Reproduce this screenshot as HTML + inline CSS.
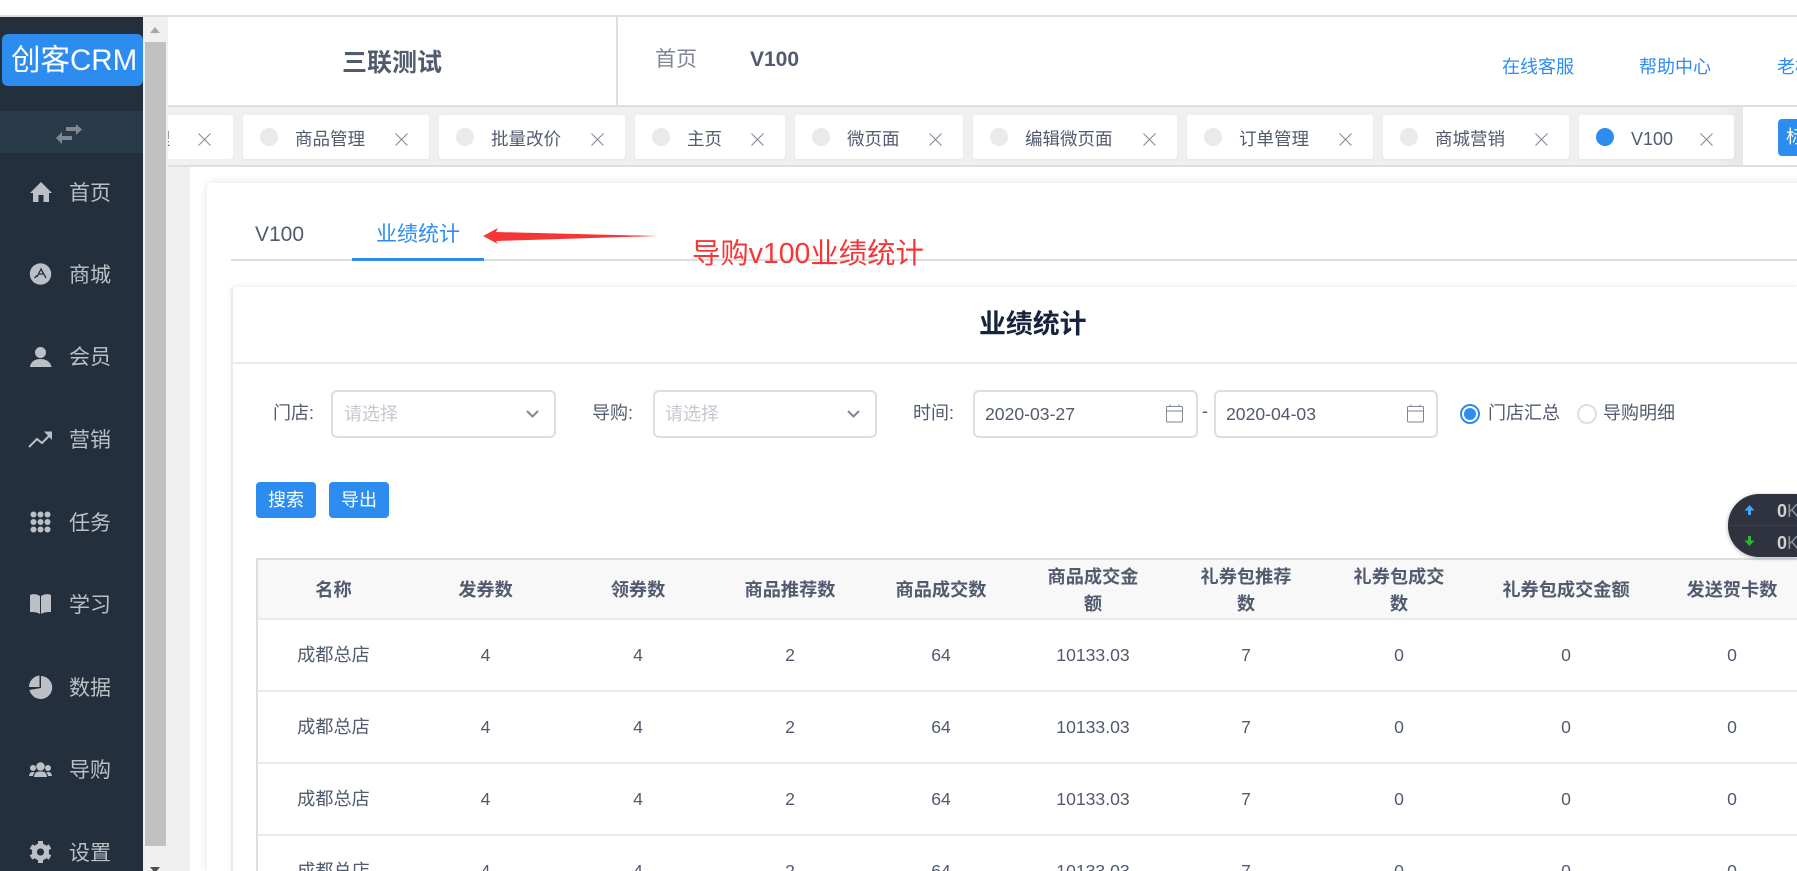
<!DOCTYPE html>
<html lang="zh-CN">
<head>
<meta charset="utf-8">
<title>业绩统计</title>
<style>
html,body{margin:0;padding:0;width:1797px;height:871px;overflow:hidden;background:#fff;}
body{font-family:"Liberation Sans","Noto Sans CJK SC",sans-serif;color:#515a6e;}
#root{position:absolute;left:0;top:0;width:1797px;height:871px;overflow:hidden;background:#fff;}
div,span{box-sizing:border-box;}
.a{position:absolute;}
.t{position:absolute;white-space:nowrap;line-height:28px;height:28px;}
.tab{position:absolute;top:115px;height:44px;background:#fff;border-radius:3px;box-shadow:0 1px 2px rgba(0,0,0,.05);}
.tab i{position:absolute;left:17px;top:13px;width:18px;height:18px;border-radius:50%;background:#e8eaec;}
.tab span{position:absolute;left:52px;top:10px;line-height:28px;font-size:17.5px;white-space:nowrap;}
.tab svg{position:absolute;right:21px;top:18px;}
.m{position:absolute;left:69px;font-size:21px;line-height:28px;height:28px;color:#bbbfc6;white-space:nowrap;}
.box{position:absolute;top:390px;height:48px;border:2px solid #dcdee2;border-radius:6px;background:#fff;}
.lb{position:absolute;top:399px;font-size:18px;line-height:28px;color:#515a6e;white-space:nowrap;}
.ph{position:absolute;top:400px;font-size:18px;line-height:28px;color:#c5c8ce;white-space:nowrap;}
.dt{position:absolute;top:400px;font-size:17.6px;line-height:28px;color:#515a6e;white-space:nowrap;}
.btn{position:absolute;top:482px;width:60px;height:36px;border-radius:4px;background:#2d8cf0;color:#fff;font-size:18px;line-height:37px;text-align:center;}
.tbl{position:absolute;left:256px;top:558px;width:1600px;border-top:2px solid #dcdee2;border-left:2px solid #dcdee2;}
.r{display:flex;height:72px;border-bottom:2px solid #e8eaec;}
.r.h{height:60px;background:#f8f8f9;font-weight:700;font-size:18px;line-height:26.5px;color:#515a6e;}
.r div{display:flex;align-items:center;justify-content:center;text-align:center;flex:none;font-size:17.6px;}
.r.h div{font-size:18.2px;padding-top:3px;}
.r div.n{font-size:18.2px;padding-bottom:2px;}
.c1{width:151px}.c2{width:153px}.c3{width:152px}.c4{width:152px}.c5{width:150px}
.c6{width:154px}.c7{width:152px}.c8{width:154px}.c9{width:180px}.c10{width:152px}
</style>
</head>
<body>
<div id="root">

<!-- top line -->
<div class="a" style="left:0;top:15px;width:1797px;height:2px;background:#dcdee2;"></div>

<!-- header -->
<div class="a" style="left:168px;top:17px;width:1629px;height:88px;background:#fff;"></div>
<div class="a" style="left:616px;top:17px;width:2px;height:88px;background:#dcdee2;"></div>
<div class="t" style="left:342px;top:49px;font-size:25px;font-weight:700;color:#515a6e;">三联测试</div>
<div class="t" style="left:655px;top:46px;font-size:21px;color:#808695;">首页</div>
<div class="t" style="left:750px;top:46px;font-size:21px;font-weight:700;color:#515a6e;">V100</div>
<div class="t" style="left:1502px;top:53px;font-size:18px;color:#2d8cf0;">在线客服</div>
<div class="t" style="left:1639px;top:53px;font-size:18px;color:#2d8cf0;">帮助中心</div>
<div class="t" style="left:1777px;top:53px;font-size:18px;color:#2d8cf0;">老板</div>
<div class="a" style="left:168px;top:105px;width:1629px;height:2px;background:#dcdee2;"></div>

<!-- tabs bar -->
<div class="a" style="left:168px;top:107px;width:1575px;height:58px;background:#f0f0f0;overflow:hidden;">
  <div class="a" style="left:1550px;top:0;width:25px;height:58px;background:linear-gradient(90deg,rgba(225,225,225,0),#e6e6e6);"></div>
</div>
<div class="a" style="left:168px;top:165px;width:1629px;height:2px;background:#dcdee2;"></div>
<div class="a" style="left:168px;top:115px;width:1575px;height:44px;overflow:hidden;">
  <div class="tab" style="left:-20px;top:0;width:85px;"><span style="left:-48px;color:#515a6e;">商品管理</span>
    <svg width="13" height="13" viewBox="0 0 13 13" style="right:22px"><path d="M.5.5l12 12M12.500.5l-12 12" stroke="#808695" stroke-width="1" fill="none"/></svg></div>
</div>
<div class="tab" style="left:243px;width:186px;"><i></i><span>商品管理</span><svg width="13" height="13" viewBox="0 0 13 13"><path d="M.5.5l12 12M12.500.5l-12 12" stroke="#808695" stroke-width="1" fill="none"/></svg></div>
<div class="tab" style="left:439px;width:186px;"><i></i><span>批量改价</span><svg width="13" height="13" viewBox="0 0 13 13"><path d="M.5.5l12 12M12.500.5l-12 12" stroke="#808695" stroke-width="1" fill="none"/></svg></div>
<div class="tab" style="left:635px;width:150px;"><i></i><span>主页</span><svg width="13" height="13" viewBox="0 0 13 13"><path d="M.5.5l12 12M12.500.5l-12 12" stroke="#808695" stroke-width="1" fill="none"/></svg></div>
<div class="tab" style="left:795px;width:168px;"><i></i><span>微页面</span><svg width="13" height="13" viewBox="0 0 13 13"><path d="M.5.5l12 12M12.500.5l-12 12" stroke="#808695" stroke-width="1" fill="none"/></svg></div>
<div class="tab" style="left:973px;width:204px;"><i></i><span>编辑微页面</span><svg width="13" height="13" viewBox="0 0 13 13"><path d="M.5.5l12 12M12.500.5l-12 12" stroke="#808695" stroke-width="1" fill="none"/></svg></div>
<div class="tab" style="left:1187px;width:186px;"><i></i><span>订单管理</span><svg width="13" height="13" viewBox="0 0 13 13"><path d="M.5.5l12 12M12.500.5l-12 12" stroke="#808695" stroke-width="1" fill="none"/></svg></div>
<div class="tab" style="left:1383px;width:186px;"><i></i><span>商城营销</span><svg width="13" height="13" viewBox="0 0 13 13"><path d="M.5.5l12 12M12.500.5l-12 12" stroke="#808695" stroke-width="1" fill="none"/></svg></div>
<div class="tab" style="left:1579px;width:155px;"><i style="background:#2d8cf0;"></i><span style="left:52px;font-size:18px;">V100</span><svg width="13" height="13" viewBox="0 0 13 13"><path d="M.5.5l12 12M12.500.5l-12 12" stroke="#808695" stroke-width="1" fill="none"/></svg></div>
<div class="a" style="left:1778px;top:119px;width:40px;height:37px;background:#2d8cf0;border-radius:4px;color:#fff;font-size:18px;line-height:37px;padding-left:8px;overflow:hidden;">标</div>

<!-- scroll gutter -->
<div class="a" style="left:143px;top:17px;width:25px;height:150px;background:#f0f0f0;"></div>
<div class="a" style="left:143px;top:167px;width:47px;height:704px;background:#f0f0f0;"></div>
<div class="a" style="left:145px;top:42px;width:21px;height:804px;background:#c1c1c1;"></div>
<div class="a" style="left:150px;top:27px;width:0;height:0;border-left:5.500px solid transparent;border-right:5.500px solid transparent;border-bottom:6px solid #a8a8a8;"></div>
<div class="a" style="left:150px;top:867px;width:0;height:0;border-left:5.500px solid transparent;border-right:5.500px solid transparent;border-top:6px solid #505050;"></div>

<!-- main card -->
<div class="a" style="left:207px;top:183px;width:1700px;height:688px;background:#fff;border-radius:5px 0 0 0;box-shadow:0 0 10px rgba(0,0,0,.12);"></div>
<div class="t" style="left:255px;top:221px;font-size:21px;">V100</div>
<div class="t" style="left:376px;top:221px;font-size:21px;color:#2d8cf0;">业绩统计</div>
<div class="a" style="left:231px;top:259px;width:1566px;height:2px;background:#dcdee2;"></div>
<div class="a" style="left:352px;top:258px;width:132px;height:3px;background:#2d8cf0;"></div>

<!-- annotation -->
<svg class="a" style="left:470px;top:220px;" width="200" height="30" viewBox="470 220 200 30">
  <polygon points="483,236 498,228 496,232 658,236 496,241 498,244" fill="#f63636"/>
</svg>
<div class="t" style="left:692px;top:240px;font-size:28.4px;color:#f63636;">导购v100业绩统计</div>

<!-- inner card -->
<div class="a" style="left:231px;top:287px;width:1566px;height:584px;background:#fff;border-left:2px solid #e8eaec;box-shadow:0 -1px 5px rgba(0,0,0,.08);border-radius:4px 0 0 0;"></div>
<div class="t" style="left:979px;top:310px;font-size:26.9px;font-weight:700;color:#17233d;">业绩统计</div>
<div class="a" style="left:233px;top:362px;width:1564px;height:2px;background:#e8eaec;"></div>

<!-- filters -->
<div class="lb" style="left:273px;">门店:</div>
<div class="box" style="left:331px;width:225px;"></div>
<div class="ph" style="left:344px;">请选择</div>
<div class="lb" style="left:592px;">导购:</div>
<div class="box" style="left:653px;width:224px;"></div>
<div class="ph" style="left:665px;">请选择</div>
<div class="lb" style="left:913px;">时间:</div>
<div class="box" style="left:973px;width:225px;"></div>
<div class="dt" style="left:985px;">2020-03-27</div>
<div class="t" style="left:1202px;top:397px;font-size:18px;">-</div>
<div class="box" style="left:1214px;width:224px;"></div>
<div class="dt" style="left:1226px;">2020-04-03</div>
<div class="a" style="left:1460px;top:404px;width:20px;height:20px;border:2px solid #2d8cf0;border-radius:50%;"></div>
<div class="a" style="left:1464px;top:408px;width:12px;height:12px;background:#2d8cf0;border-radius:50%;"></div>
<div class="lb" style="left:1488px;">门店汇总</div>
<div class="a" style="left:1577px;top:404px;width:20px;height:20px;border:2px solid #dcdee2;border-radius:50%;background:#fff;"></div>
<div class="lb" style="left:1603px;">导购明细</div>

<div class="btn" style="left:256px;">搜索</div>
<div class="btn" style="left:329px;">导出</div>

<!-- table -->
<div class="tbl">
  <div class="r h"><div class="c1">名称</div><div class="c2">发券数</div><div class="c3">领券数</div><div class="c4">商品推荐数</div><div class="c5">商品成交数</div><div class="c6">商品成交金<br>额</div><div class="c7">礼券包推荐<br>数</div><div class="c8">礼券包成交<br>数</div><div class="c9">礼券包成交金额</div><div class="c10">发送贺卡数</div></div>
  <div class="r"><div class="c1 n">成都总店</div><div class="c2">4</div><div class="c3">4</div><div class="c4">2</div><div class="c5">64</div><div class="c6">10133.03</div><div class="c7">7</div><div class="c8">0</div><div class="c9">0</div><div class="c10">0</div></div>
  <div class="r"><div class="c1 n">成都总店</div><div class="c2">4</div><div class="c3">4</div><div class="c4">2</div><div class="c5">64</div><div class="c6">10133.03</div><div class="c7">7</div><div class="c8">0</div><div class="c9">0</div><div class="c10">0</div></div>
  <div class="r"><div class="c1 n">成都总店</div><div class="c2">4</div><div class="c3">4</div><div class="c4">2</div><div class="c5">64</div><div class="c6">10133.03</div><div class="c7">7</div><div class="c8">0</div><div class="c9">0</div><div class="c10">0</div></div>
  <div class="r"><div class="c1 n">成都总店</div><div class="c2">4</div><div class="c3">4</div><div class="c4">2</div><div class="c5">64</div><div class="c6">10133.03</div><div class="c7">7</div><div class="c8">0</div><div class="c9">0</div><div class="c10">0</div></div>
</div>

<!-- speed widget -->
<div class="a" style="left:1728px;top:494px;width:69px;height:63px;background:#2f333f;border-radius:31px 0 0 31px;box-shadow:0 1px 4px rgba(0,0,0,.3);overflow:hidden;">
  <div class="a" style="left:0;top:31px;width:69px;height:1px;background:#3b3f4b;"></div>
  <div class="a" style="left:49px;top:6px;font-size:18px;font-weight:700;line-height:22px;color:#d0d0d0;white-space:nowrap;">0<span style="font-weight:400;color:#8f939c;">K</span></div>
  <div class="a" style="left:49px;top:38px;font-size:18px;font-weight:700;line-height:22px;color:#d0d0d0;white-space:nowrap;">0<span style="font-weight:400;color:#8f939c;">K</span></div>
</div>

<!-- sidebar -->
<div class="a" style="left:0;top:17px;width:143px;height:854px;background:#232f3c;"></div>
<div class="a" style="left:0;top:111px;width:143px;height:42px;background:#293a4b;"></div>
<div class="a" style="left:2px;top:34px;width:141px;height:52px;background:#2d8cf0;border-radius:6px;color:#fff;font-size:29.5px;line-height:53px;padding-left:9px;white-space:nowrap;overflow:hidden;">创客CRM</div>
<div class="m" style="top:180px;">首页</div>
<div class="m" style="top:262px;">商城</div>
<div class="m" style="top:344px;">会员</div>
<div class="m" style="top:427px;">营销</div>
<div class="m" style="top:510px;">任务</div>
<div class="m" style="top:592px;">学习</div>
<div class="m" style="top:675px;">数据</div>
<div class="m" style="top:757px;">导购</div>
<div class="m" style="top:840px;">设置</div>

<!-- icon overlay, absolute coords -->
<svg class="a" style="left:0;top:0;pointer-events:none;" width="1797" height="871" viewBox="0 0 1797 871">
  <!-- swap -->
  <path d="M66 127H76V124L82 129.500 76 135V131H66Z" fill="#7f8791"/>
  <path d="M72 136H62V132L56 138 62 144V140H72Z" fill="#7f8791"/>
  <g fill="#bbbfc6">
    <!-- home -->
    <path d="M41 182L30 193H33V202H38.500V195H43.500V202H49V193H52Z"/>
    <!-- store -->
    <circle cx="40.500" cy="274" r="10.700"/>
    <!-- user -->
    <circle cx="40.500" cy="352.500" r="5.500"/>
    <path d="M30 367C30.500 361 36 359 40.500 359S50.500 361 51.500 367Z"/>
    <!-- trend head -->
    <path d="M44 431.500H52V440Z"/>
    <!-- grid -->
    <circle cx="33.500" cy="514.500" r="3"/><circle cx="40.500" cy="514.500" r="3"/><circle cx="47.500" cy="514.500" r="3"/>
    <circle cx="33.500" cy="522" r="3"/><circle cx="40.500" cy="522" r="3"/><circle cx="47.500" cy="522" r="3"/>
    <circle cx="33.500" cy="529.500" r="3"/><circle cx="40.500" cy="529.500" r="3"/><circle cx="47.500" cy="529.500" r="3"/>
    <!-- book -->
    <path d="M30 595C33 593.500 37 594 40 596V614C37 612 33 612 30 612Z"/>
    <path d="M51 595C48 593.500 44 594 41 596V614C44 612 48 612 51 612Z"/>
    <!-- pie -->
    <path d="M41 676A11.500 11.500 0 1 1 29.500 690L41 688Z"/>
    <path d="M39.500 675.500A11.500 11.500 0 0 0 29 687L39.500 687Z"/>
    <!-- team -->
    <circle cx="40.500" cy="766.500" r="4.300"/>
    <path d="M34 777C34.500 772 37 771.500 40.500 771.500S46.500 772 47 777Z"/>
    <circle cx="33" cy="768" r="3"/>
    <path d="M29 776C29.500 772.500 31 772 33 772L35 772.500C33.500 773.500 33 775 33 776Z"/>
    <circle cx="48" cy="768" r="3"/>
    <path d="M52 776C51.500 772.500 50 772 48 772L46 772.500C47.500 773.500 48 775 48 776Z"/>
    <!-- gear -->
    <circle cx="40.500" cy="852" r="8.500"/>
  </g>
  <!-- store glyph -->
  <path d="M34.500 278L37 275.500M37 277L41 269L46 278M38.500 274H43.500" stroke="#232f3c" stroke-width="1.300" fill="none"/>
  <!-- trend -->
  <path d="M29 447L37 439L42 443L50 435" stroke="#bbbfc6" stroke-width="2" fill="none"/>
  <!-- gear teeth -->
  <g stroke="#bbbfc6" stroke-width="5" fill="none">
    <path d="M40.500 841V863M31 846.500L50 857.500M31 857.500L50 846.500"/>
  </g>
  <circle cx="40.500" cy="852" r="3.600" fill="#232f3c"/>
  <!-- chevrons -->
  <path d="M527 411L532.500 416.500L538 411" stroke="#808695" stroke-width="2" fill="none"/>
  <path d="M848 411L853.500 416.500L859 411" stroke="#808695" stroke-width="2" fill="none"/>
  <!-- calendars -->
  <g stroke="#808695" stroke-width="1" fill="none">
    <rect x="1166.500" y="406.500" width="16" height="15.500" rx="1"/><path d="M1166.500 411H1182.500M1170 404.500V407M1179 404.500V407"/>
    <rect x="1407.500" y="406.500" width="16" height="15.500" rx="1"/><path d="M1407.500 411H1423.500M1411 404.500V407M1420 404.500V407"/>
  </g>
  <!-- speed arrows -->
  <path d="M1749.500 505L1754.500 510.500H1751V515H1748V510.500H1744.500Z" fill="#3fa9f5"/>
  <path d="M1749.500 546L1754.500 540.500H1751V536H1748V540.500H1744.500Z" fill="#2eb82e"/>
</svg>

</div>
</body>
</html>
